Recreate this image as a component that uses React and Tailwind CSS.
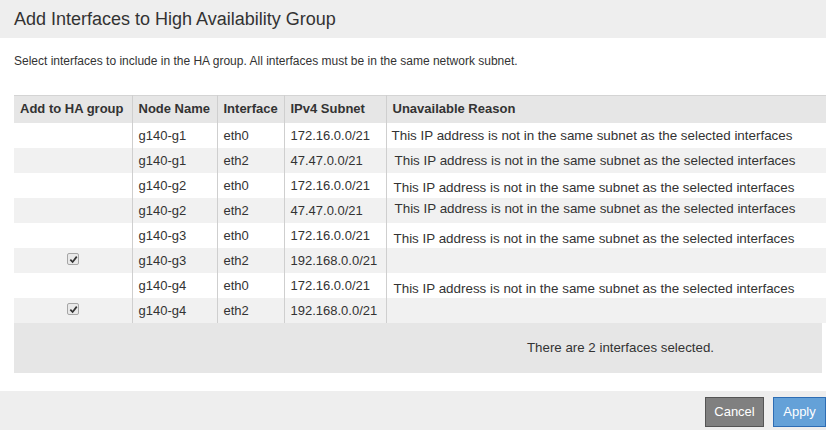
import React from "react";

const rows = [
  { node: "g140-g1", iface: "eth0", subnet: "172.16.0.0/21", reason: true, pad: "pt-0 pl-[5px]" },
  { node: "g140-g1", iface: "eth2", subnet: "47.47.0.0/21", reason: true, pad: "pt-0 pl-[8px]" },
  { node: "g140-g2", iface: "eth0", subnet: "172.16.0.0/21", reason: true, pad: "pt-[5px] pl-[7px]" },
  { node: "g140-g2", iface: "eth2", subnet: "47.47.0.0/21", reason: true, pad: "pt-0 pb-[3px] pl-[8px]" },
  { node: "g140-g3", iface: "eth0", subnet: "172.16.0.0/21", reason: true, pad: "pt-[7px] pl-[7px]" },
  { node: "g140-g3", iface: "eth2", subnet: "192.168.0.0/21", checked: true },
  { node: "g140-g4", iface: "eth0", subnet: "172.16.0.0/21", reason: true, pad: "pt-[7px] pl-[7px]" },
  { node: "g140-g4", iface: "eth2", subnet: "192.168.0.0/21", checked: true },
];

const CheckMark = () => (
  <span className="flex items-center justify-center w-[12px] h-[12px] border border-[#a6a6a6] rounded-[2px] bg-[#e9e9e9]">
    <svg width="9" height="9" viewBox="0 0 10 10">
      <path d="M1.5 5.2 L4 7.8 L8.6 1.8" fill="none" stroke="#333" strokeWidth="1.9" />
    </svg>
  </span>
);

const App = () => {
  return (
    <div
      className="w-[826px] h-[430px] overflow-hidden bg-white text-[#333] flex flex-col"
      style={{ fontFamily: '"Liberation Sans", Arial, sans-serif' }}
    >
      <div className="h-[38px] shrink-0 bg-[#eeeeee] flex items-center px-[14px]">
        <h1 className="text-[18px] leading-none">Add Interfaces to High Availability Group</h1>
      </div>

      <div className="pl-[14px] pt-[16px] h-[57px] shrink-0">
        <p className="text-[12px] leading-[14px]">
          Select interfaces to include in the HA group. All interfaces must be in the same network subnet.
        </p>
      </div>

      <div className="pl-[14px] shrink-0">
        <table className="table-fixed border-collapse w-[812px] text-[13px] leading-[17px]">
          <colgroup>
            <col className="w-[118px]" />
            <col className="w-[85px]" />
            <col className="w-[67px]" />
            <col className="w-[102px]" />
            <col />
          </colgroup>
          <thead>
            <tr className="bg-[#e6e6e6] h-[27px] border-t border-[#d4d4d4]">
              <th className="text-left font-bold px-[6px] pb-[1px]">Add to HA group</th>
              <th className="text-left font-bold px-[6px] pb-[1px] border-l border-[#cfcfcf]">Node Name</th>
              <th className="text-left font-bold px-[6px] pb-[1px] border-l border-[#cfcfcf]">Interface</th>
              <th className="text-left font-bold px-[6px] pb-[1px] border-l border-[#cfcfcf]">IPv4 Subnet</th>
              <th className="text-left font-bold px-[6px] pb-[1px] border-l border-[#cfcfcf]">Unavailable Reason</th>
            </tr>
          </thead>
          <tbody>
            {rows.map((r, i) => (
              <tr key={i} className={`h-[25px] ${i % 2 === 1 ? "bg-[#f1f1f1]" : "bg-white"}`}>
                <td className="p-0 align-middle">
                  {r.checked && (
                    <div className="flex justify-center pl-[1px] pb-[2px]">
                      <CheckMark />
                    </div>
                  )}
                </td>
                <td className="px-[6px] py-0 border-l border-[#cfcfcf]">{r.node}</td>
                <td className="px-[6px] py-0 border-l border-[#cfcfcf]">{r.iface}</td>
                <td className="px-[6px] py-0 border-l border-[#cfcfcf]">{r.subnet}</td>
                <td className={`py-0 border-l border-[#cfcfcf] whitespace-nowrap text-[13.4px] ${r.pad || ""}`}>
                  {r.reason ? "This IP address is not in the same subnet as the selected interfaces" : ""}
                </td>
              </tr>
            ))}
          </tbody>
        </table>
        <div className="w-[808px] h-[50px] bg-[#e6e6e6] flex items-center pl-[513px] text-[13.3px]">
          There are 2 interfaces selected.
        </div>
      </div>

      <div className="h-[18px] shrink-0" />

      <div className="flex-1 bg-[#eeeeee] flex items-start justify-end gap-[9px] pt-[6px]">
        <button className="h-[30px] w-[59px] bg-[#808080] border border-[#555] text-white text-[13px]">
          Cancel
        </button>
        <button className="h-[30px] w-[53px] bg-[#64a1d8] border border-[#2e6db4] text-white text-[13px]">
          Apply
        </button>
      </div>
    </div>
  );
};

export default App;
